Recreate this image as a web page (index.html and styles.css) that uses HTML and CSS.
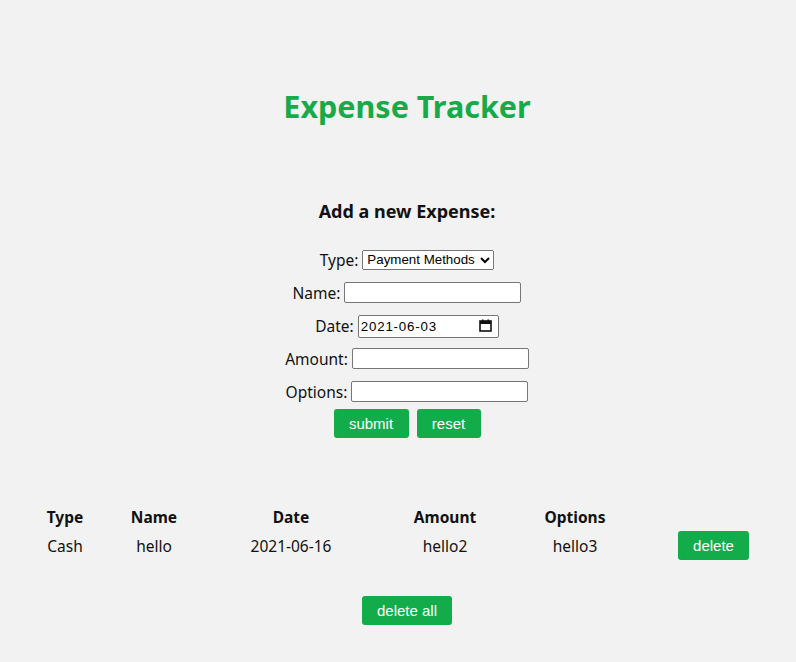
FILE: index.html
```html
<!DOCTYPE html>
<html>
<head>
<meta charset="utf-8">
<link rel="stylesheet" href="styles.css">
</head>
<body>
<div class="page">
  <h1 class="title">Expense Tracker</h1>
  <h3 class="subtitle">Add a new Expense:</h3>
  <form class="form">
    <div class="row"><label>Type:</label>
      <select class="ctl sel"><option>Payment Methods</option><option>Cash</option></select>
    </div>
    <div class="row"><label>Name:</label><input class="ctl txt" type="text"></div>
    <div class="row"><label>Date:</label>
      <span class="date">
        <input class="ctl txt date-in" type="text" value="2021-06-03">
        <svg class="cal" width="13" height="13" viewBox="0 0 13 13"><rect x="1" y="2" width="11" height="10" fill="none" stroke="#111" stroke-width="1.6"/><rect x="1" y="2" width="11" height="3" fill="#111"/><rect x="3" y="0.5" width="1.6" height="2.5" fill="#111"/><rect x="8.4" y="0.5" width="1.6" height="2.5" fill="#111"/></svg>
      </span>
    </div>
    <div class="row"><label>Amount:</label><input class="ctl txt" type="text"></div>
    <div class="row"><label>Options:</label><input class="ctl txt" type="text"></div>
    <div class="btns">
      <button type="button" class="btn btn-submit">submit</button>
      <button type="button" class="btn btn-reset">reset</button>
    </div>
  </form>
  <table class="table">
    <thead>
      <tr><th class="c1">Type</th><th class="c2">Name</th><th class="c3">Date</th><th class="c4">Amount</th><th class="c5">Options</th><th class="c6"></th></tr>
    </thead>
    <tbody>
      <tr><td>Cash</td><td>hello</td><td>2021-06-16</td><td>hello2</td><td>hello3</td><td><button type="button" class="btn btn-del">delete</button></td></tr>
    </tbody>
  </table>
  <div class="footer"><button type="button" class="btn btn-all">delete all</button></div>
</div>
</body>
</html>
```
FILE: styles.css
```css
html, body { margin: 0; padding: 0; }
body {
  background: #f2f2f2;
  font-family: "Noto Sans", "Malgun Gothic", sans-serif;
  color: #111;
  font-size: 16px;
}
.page {
  display: flex;
  flex-direction: column;
  align-items: center;
  padding-top: 83px;
  padding-left: 18px;
}
.title {
  margin: 0;
  color: #17aa48;
  font-size: 30.5px;
  font-weight: 700;
  line-height: 46px;
}
.subtitle {
  margin: 70px 0 0;
  font-size: 18px;
  font-weight: 700;
  line-height: 24px;
}
.form {
  margin-top: 20px;
  display: flex;
  flex-direction: column;
  align-items: center;
}
.row {
  display: flex;
  align-items: center;
  gap: 4px;
  height: 33px;
}
.row label { font-size: 15.5px; }
.ctl {
  font-family: Arial, "Liberation Sans", sans-serif;
  font-size: 13.33px;
  color: #000;
}
.sel { width: 132px; height: 20px; }
.txt {
  box-sizing: border-box;
  width: 177px;
  height: 21px;
  border: 1px solid #767676;
  border-radius: 2px;
  background: #fff;
  padding: 1px 2px;
}
.date { position: relative; display: inline-block; }
.date-in { width: 141px; height: 23px; letter-spacing: 0.8px; }
.cal { position: absolute; right: 7px; top: 5px; }
.btns {
  display: flex;
  gap: 8px;
  margin-top: 1px;
}
.btn {
  background: #12ad4a;
  color: #fff;
  border: none;
  border-radius: 3px;
  font-family: Arial, "Liberation Sans", sans-serif;
  font-size: 15px;
  height: 29px;
  padding: 0;
  white-space: nowrap;
  cursor: pointer;
}
.btn-submit { width: 75px; }
.btn-reset { width: 64px; }
.table {
  margin-top: 64px;
  border-collapse: collapse;
  align-self: flex-start;
  margin-left: 12px;
}
.table th, .table td {
  text-align: center;
  padding: 0;
  font-size: 15.5px;
}
.table th { font-weight: 700; height: 29px; }
.table td { height: 29px; }
.c1 { width: 70px; }
.c2 { width: 108px; }
.c3 { width: 166px; }
.c4 { width: 142px; }
.c5 { width: 118px; }
.c6 { width: 159px; }
.btn-del { width: 71px; }
.footer { margin-top: 36px; }
.btn-all { width: 90px; }
```
